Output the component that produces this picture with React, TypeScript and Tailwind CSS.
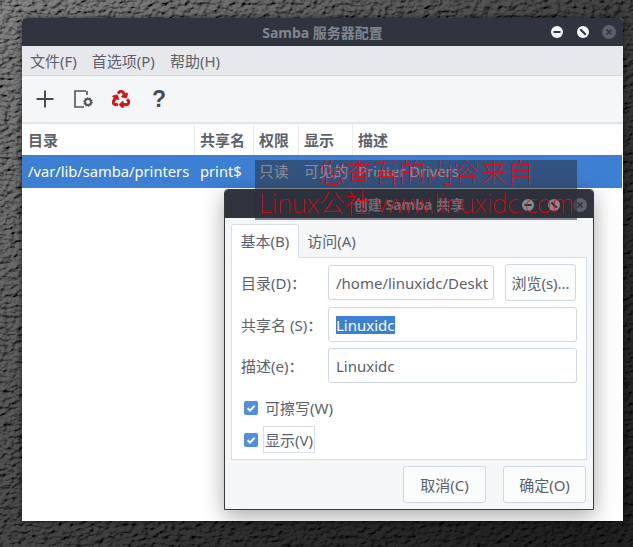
import React from "react";
import { FaRecycle } from "react-icons/fa";

const FONT = "font-['Noto_Sans','Noto_Sans_CJK_SC',sans-serif]";

function Leather() {
  return (
    <svg className="absolute inset-0 w-full h-full" width="633" height="547">
      <defs>
        <filter id="leather" x="0" y="0" width="100%" height="100%">
          <feTurbulence type="fractalNoise" baseFrequency="0.15 0.24" numOctaves="5" seed="11" result="n" />
          <feDiffuseLighting in="n" surfaceScale="4.5" diffuseConstant="0.95" lightingColor="#ffffff">
            <feDistantLight azimuth="225" elevation="52" />
          </feDiffuseLighting>
        </filter>
        <linearGradient id="shade" x1="0" y1="0" x2="1" y2="0.9">
          <stop offset="0" stopColor="#000" stopOpacity="0.45" />
          <stop offset="0.35" stopColor="#000" stopOpacity="0.62" />
          <stop offset="0.7" stopColor="#000" stopOpacity="0.8" />
          <stop offset="1" stopColor="#000" stopOpacity="0.86" />
        </linearGradient>
      </defs>
      <rect width="633" height="547" filter="url(#leather)" />
      <rect width="633" height="547" fill="url(#shade)" />
    </svg>
  );
}

function WinButtons() {
  return (
    <div className="flex items-center gap-[12px]">
      <svg width="14" height="14" viewBox="0 0 14 14">
        <circle cx="7" cy="7" r="6" fill="#f5f6f7" />
        <rect x="3.5" y="6" width="7" height="2" fill="#2f343f" />
      </svg>
      <svg width="14" height="14" viewBox="0 0 14 14">
        <circle cx="7" cy="7" r="6" fill="#f5f6f7" />
        <path d="M4 4.5 L9.5 10 M4.5 4 L10 9.5" stroke="#2f343f" strokeWidth="1.4" />
      </svg>
      <svg width="14" height="14" viewBox="0 0 14 14">
        <circle cx="7" cy="7" r="7" fill="#5c616c" />
        <path d="M4.5 4.5 L9.5 9.5 M9.5 4.5 L4.5 9.5" stroke="#2f343f" strokeWidth="1.6" />
      </svg>
    </div>
  );
}

function ToolIcons() {
  return (
    <div className="flex items-center h-[46px] pl-[13px] gap-[18px] bg-[#f5f6f7] shrink-0">
      <svg width="20" height="20" viewBox="0 0 20 20">
        <path d="M10 1.5 V18.5 M1.5 10 H18.5" stroke="#4b4b4b" strokeWidth="2" />
      </svg>
      <svg width="20" height="20" viewBox="0 0 20 20">
        <path d="M13 2 H2 V18 H11 M14 2 V6" fill="none" stroke="#555" strokeWidth="1.6" />
        <circle cx="15" cy="13" r="3" fill="none" stroke="#555" strokeWidth="2" />
        <circle cx="15" cy="13" r="4.2" fill="none" stroke="#555" strokeWidth="1.2" strokeDasharray="1.3 1.3" />
      </svg>
      <span className="w-[20px] flex justify-center">
        <FaRecycle size={18} color="#cc1414" stroke="#cc1414" strokeWidth={24} />
      </span>
      <span className="w-[20px] text-center font-bold text-[23px] leading-none text-[#4b4b4b] font-['Liberation_Sans',sans-serif]">?</span>
    </div>
  );
}

function HeaderCell({ w, children }: { w: string; children: React.ReactNode }) {
  return (
    <div className={`${w} h-full flex items-center pl-[5px] pt-[2px] border-r border-[#ececee] font-bold text-[15px] text-[#5c616c] shrink-0`}>
      {children}
    </div>
  );
}

function RowCell({ w, children }: { w: string; children: React.ReactNode }) {
  return <div className={`${w} pl-[5px] shrink-0 whitespace-nowrap`}>{children}</div>;
}

function Field({ label, value, selected }: { label: string; value: string; selected?: boolean }) {
  return (
    <div className="flex items-center">
      <div className="w-[96px] pl-[9px] pt-px text-[#5c616c] whitespace-nowrap">{label}</div>
      <div className="w-[249px] h-[35px] rounded-[3px] border border-[#cfd6e6] bg-white flex items-center pl-[7px] pt-px text-[#5c616c]">
        {selected ? <span className="bg-[#3d7fd3] text-white leading-[18px]">{value}</span> : value}
      </div>
    </div>
  );
}

function Check({ label, boxed }: { label: string; boxed?: boolean }) {
  return (
    <div className="flex items-center gap-[5px] pl-[12px]">
      <svg width="14" height="14" viewBox="0 0 14 14">
        <rect width="14" height="14" rx="2" fill="#4f8fe0" />
        <path d="M3.6 7.2 L6 9.6 L10.6 4.8" fill="none" stroke="#fff" strokeWidth="2" />
      </svg>
      <span className={`px-[1px] pt-px h-[27px] flex items-center text-[#5c616c] border ${boxed ? "border-[#d8dee9]" : "border-transparent"}`}>
        {label}
      </span>
    </div>
  );
}

function Dialog() {
  return (
    <div className="absolute left-[224px] top-[189px] w-[370px] h-[321px] rounded-t-[4px] border border-[#3a3a3a] bg-[#f5f6f7] shadow-[0_6px_22px_rgba(0,0,0,0.35)] flex flex-col text-[15px]">
      <div className="relative h-[28px] bg-[#2f343f] rounded-t-[3px] flex items-center justify-center shrink-0">
        <span className="font-bold text-[14px] text-[#b4b8c0]">创建 Samba 共享</span>
        <div className="absolute right-[6px] top-[8px]">
          <WinButtons />
        </div>
      </div>
      <div className="flex flex-col flex-1 px-[6px] pt-[6px]">
        <div className="flex h-[34px] relative z-10">
          <div className="w-[68px] h-[34px] flex items-center justify-center pt-px bg-white border border-[#d8dee9] border-b-white rounded-t-[3px] text-[#5c616c]">基本(B)</div>
          <div className="w-[65px] flex items-center justify-center pt-px text-[#5c616c]">访问(A)</div>
        </div>
        <div className="-mt-px h-[203px] bg-white border border-[#d8dee9] flex flex-col">
          <div className="flex flex-col gap-[6px] pt-[6px]">
            <div className="flex items-center">
              <div className="w-[96px] pl-[9px] pt-px text-[#5c616c] whitespace-nowrap">目录(D)：</div>
              <div className="w-[166px] h-[35px] rounded-[3px] border border-[#cfd6e6] bg-white flex items-center pl-[7px] pt-px text-[#5c616c] overflow-hidden whitespace-nowrap">/home/linuxidc/Deskt</div>
              <div className="ml-[11px] w-[71px] h-[37px] rounded-[3px] border border-[#cfd6e6] bg-[#fbfcfc] flex items-center justify-center pt-px text-[#5c616c] whitespace-nowrap">浏览(s)...</div>
            </div>
            <Field label="共享名 (S)：" value="Linuxidc" selected />
            <Field label="描述(e)：" value="Linuxidc" />
          </div>
          <div className="flex flex-col gap-[5px] mt-[11px]">
            <Check label="可擦写(W)" />
            <Check label="显示(V)" boxed />
          </div>
        </div>
        <div className="flex justify-end gap-[17px] pt-[6px] pr-[1px]">
          <div className="w-[83px] h-[37px] rounded-[3px] border border-[#cfd6e6] bg-[#fbfcfc] flex items-center justify-center pt-px text-[#5c616c]">取消(C)</div>
          <div className="w-[83px] h-[37px] rounded-[3px] border border-[#cfd6e6] bg-[#fbfcfc] flex items-center justify-center pt-px text-[#5c616c]">确定(O)</div>
        </div>
      </div>
    </div>
  );
}

export default function App() {
  return (
    <div className={`relative w-[633px] h-[547px] overflow-hidden text-[14.7px] ${FONT}`}>
      <Leather />

      <div className="relative pt-[18px] pl-[22px]">
        {/* main window */}
        <div className="w-[601px] h-[503px] flex flex-col bg-white rounded-t-[4px] shadow-[0_0_6px_rgba(0,0,0,0.6)]">
          <div className="relative h-[28px] bg-[#2f343f] rounded-t-[4px] flex items-center justify-center shrink-0">
            <span className="font-bold text-[14px] text-[#80858f]">Samba 服务器配置</span>
            <div className="absolute right-[7px] top-[7px]">
              <WinButtons />
            </div>
          </div>
          <div className="h-[30px] bg-[#e7e8eb] border-b border-[#d3d4dc] flex items-center pl-[8px] pt-[2px] gap-[15px] text-[15px] text-[#5c616c] shrink-0">
            <span>文件(F)</span>
            <span>首选项(P)</span>
            <span>帮助(H)</span>
          </div>
          <ToolIcons />
          <div className="h-[2px] bg-[#e4e4e7] shrink-0" />
          <div className="flex h-[31px] shrink-0 pl-px">
            <HeaderCell w="w-[172px]">目录</HeaderCell>
            <HeaderCell w="w-[59px]">共享名</HeaderCell>
            <HeaderCell w="w-[45px]">权限</HeaderCell>
            <HeaderCell w="w-[54px]">显示</HeaderCell>
            <div className="flex-1 h-full flex items-center pl-[5px] pt-[2px] font-bold text-[15px] text-[#5c616c]">描述</div>
          </div>
          <div className="flex items-center h-[33px] bg-[#3d7fd3] text-white shrink-0 pl-px mr-px">
            <RowCell w="w-[172px]">/var/lib/samba/printers</RowCell>
            <RowCell w="w-[59px]">print$</RowCell>
            <RowCell w="w-[45px]">只读</RowCell>
            <RowCell w="w-[54px]">可见的</RowCell>
            <RowCell w="w-[200px]">Printer Drivers</RowCell>
          </div>
        </div>
      </div>

      <Dialog />

      {/* watermark */}
      <div className="absolute left-[255px] top-[160px] w-[322px] h-[60px] bg-[#2a2f3a]/55 text-[#f00000] font-thin whitespace-nowrap">
        <div className="h-[30px] text-[27px] leading-[26px] pl-[63px]">您查看的内容来自</div>
        <div className="text-[25.7px] leading-[28px] pl-[4px]">Linux公社 www.linuxidc.com</div>
      </div>
    </div>
  );
}
